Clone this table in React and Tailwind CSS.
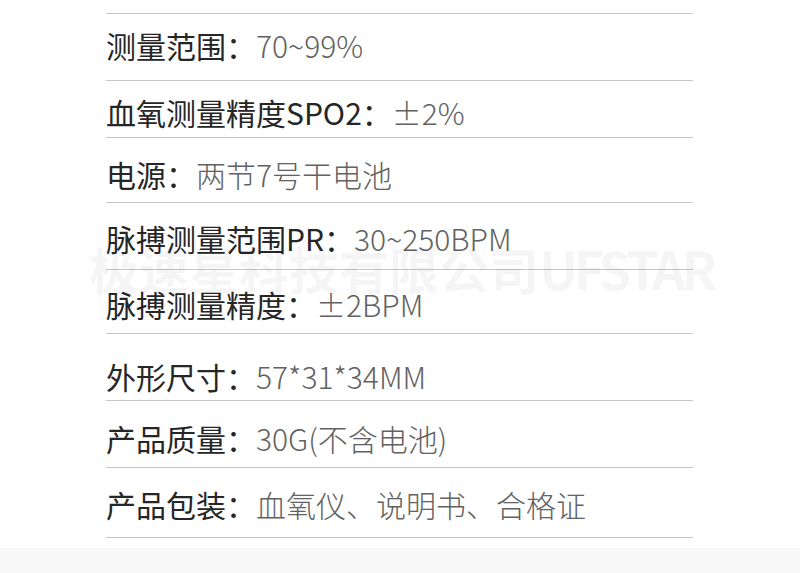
import React from "react";

const rows = [
  { label: "测量范围：", value: "70~99%", h: "h-[67px]", pt: "pt-[16px]" },
  { label: "血氧测量精度SPO2：", value: "±2%", h: "h-[57px]", pt: "pt-[16px]" },
  { label: "电源：", value: "两节7号干电池", h: "h-[65px]", pt: "pt-[21px]" },
  { label: "脉搏测量范围PR：", value: "30~250BPM", h: "h-[67px]", pt: "pt-[20px]" },
  { label: "脉搏测量精度：", value: "±2BPM", h: "h-[64px]", pt: "pt-[19px]" },
  { label: "外形尺寸：", value: "57*31*34MM", h: "h-[67px]", pt: "pt-[27px]" },
  { label: "产品质量：", value: "30G(不含电池)", h: "h-[67px]", pt: "pt-[22px]" },
  { label: "产品包装：", value: "血氧仪、说明书、合格证", h: "h-[70px]", pt: "pt-[21px]" },
];

export default function App() {
  return (
    <div
      className="relative w-[800px] h-[573px] bg-white overflow-hidden"
      style={{ fontFamily: '"Noto Sans CJK SC", "Noto Sans", sans-serif' }}
    >
      <div className="ml-[106px] w-[587px] h-[14px] border-b border-[#c6c6c6] box-border" />
      {rows.map((r, i) => (
        <div
          key={i}
          className={`ml-[106px] w-[587px] ${r.h} ${r.pt} border-b border-[#c6c6c6] box-border flex`}
        >
          <div className="text-[30px] leading-[30px] whitespace-nowrap">
            <span className="text-[#262626]">{r.label}</span>
            <span className="text-[#626262] font-light">{r.value}</span>
          </div>
        </div>
      ))}
      <div className="absolute left-0 right-0 top-[548px] bottom-0 bg-[#f9f9f9]" />
      <div className="pointer-events-none absolute left-[89px] top-[240px] text-[50px] leading-[56px] font-bold text-black/[0.04] whitespace-nowrap">
        极速星科技有限公司<span className="text-[52px] tracking-[-4px]">UFSTAR</span>
      </div>
    </div>
  );
}
